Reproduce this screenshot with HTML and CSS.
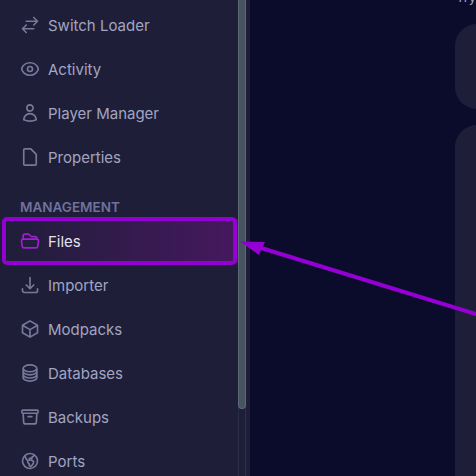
FILE: index.html
```html
<!DOCTYPE html>
<html lang="en">
<head>
<meta charset="utf-8">
<title>Files</title>
<link rel="stylesheet" href="styles.css">
</head>
<body>
<div class="app">
  <aside class="sidebar">
    <nav class="nav">
      <a class="item"><svg class="icon" viewBox="0 0 24 24"><path d="M7.5 21 3 16.5m0 0L7.5 12M3 16.5h13.5m0-13.5L21 7.5m0 0L16.5 12M21 7.5H7.5"/></svg>Switch Loader</a>
      <a class="item"><svg class="icon" viewBox="0 0 24 24"><path d="M2.036 12.322a1.012 1.012 0 0 1 0-.639C3.423 7.51 7.36 4.5 12 4.5c4.638 0 8.573 3.007 9.963 7.178.07.207.07.431 0 .639C20.577 16.49 16.64 19.5 12 19.5c-4.638 0-8.573-3.007-9.963-7.178Z"/><path d="M15 12a3 3 0 1 1-6 0 3 3 0 0 1 6 0Z"/></svg>Activity</a>
      <a class="item"><svg class="icon" viewBox="0 0 24 24"><path d="M15.75 6a3.75 3.75 0 1 1-7.5 0 3.75 3.75 0 0 1 7.5 0ZM4.501 20.118a7.5 7.5 0 0 1 14.998 0A17.933 17.933 0 0 1 12 21.75c-2.676 0-5.216-.584-7.499-1.632Z"/></svg>Player Manager</a>
      <a class="item"><svg class="icon" viewBox="0 0 24 24"><path d="M13 2.25H5.625c-.621 0-1.125.504-1.125 1.125v17.25c0 .621.504 1.125 1.125 1.125h12.75c.621 0 1.125-.504 1.125-1.125V8.75Z"/></svg>Properties</a>
      <div class="heading">MANAGEMENT</div>
      <a class="item active"><svg class="icon" viewBox="0 0 24 24"><path d="M3.75 9.776c.112-.017.227-.026.344-.026h15.812c.117 0 .232.009.344.026m-16.5 0a2.25 2.25 0 0 0-1.883 2.542l.857 6a2.25 2.25 0 0 0 2.227 1.932H19.05a2.25 2.25 0 0 0 2.227-1.932l.857-6a2.25 2.25 0 0 0-1.883-2.542m-16.5 0V6A2.25 2.25 0 0 1 6 3.75h3.879a1.5 1.5 0 0 1 1.06.44l2.122 2.12a1.5 1.5 0 0 0 1.06.44H18A2.25 2.25 0 0 1 20.25 9v.776"/></svg>Files</a>
      <a class="item"><svg class="icon" viewBox="0 0 24 24"><path d="M3 16.5v2.25A2.25 2.25 0 0 0 5.25 21h13.5A2.25 2.25 0 0 0 21 18.75V16.5M16.5 12 12 16.5m0 0L7.5 12m4.5 4.5V3"/></svg>Importer</a>
      <a class="item"><svg class="icon" viewBox="0 0 24 24"><path d="m21 7.5-9-5.25L3 7.5m18 0-9 5.25m9-5.25v9l-9 5.25M3 7.5l9 5.25M3 7.5v9l9 5.25m0-9v9"/></svg>Modpacks</a>
      <a class="item"><svg class="icon" viewBox="0 0 24 24"><path d="M20.25 6.375c0 2.278-3.694 4.125-8.25 4.125S3.75 8.653 3.75 6.375m16.5 0c0-2.278-3.694-4.125-8.25-4.125S3.75 4.097 3.75 6.375m16.5 0v11.25c0 2.278-3.694 4.125-8.25 4.125s-8.25-1.847-8.25-4.125V6.375m16.5 0v3.75m-16.5-3.75v3.75m16.5 0v3.75C20.25 16.153 16.556 18 12 18s-8.25-1.847-8.25-4.125v-3.75m16.5 0c0 2.278-3.694 4.125-8.25 4.125s-8.25-1.847-8.25-4.125"/></svg>Databases</a>
      <a class="item"><svg class="icon" viewBox="0 0 24 24"><path d="m20.25 7.5-.625 10.632a2.25 2.25 0 0 1-2.247 2.118H6.622a2.25 2.25 0 0 1-2.247-2.118L3.75 7.5m6 4.125h4.5M3.375 7.5h17.25c.621 0 1.125-.504 1.125-1.125v-1.5c0-.621-.504-1.125-1.125-1.125H3.375c-.621 0-1.125.504-1.125 1.125v1.5c0 .621.504 1.125 1.125 1.125Z"/></svg>Backups</a>
      <a class="item"><svg class="icon" viewBox="0 0 24 24"><path d="m6.115 5.19.319 1.913A6 6 0 0 0 8.11 10.36L9.75 12l-.387.775c-.217.433-.132.956.21 1.298l1.348 1.348c.21.21.329.497.329.795v1.089c0 .426.24.815.622 1.006l.153.076c.433.217.956.132 1.298-.21l.723-.723a8.7 8.7 0 0 0 2.288-4.042 1.087 1.087 0 0 0-.358-1.099l-1.33-1.108c-.251-.21-.582-.299-.905-.245l-1.17.195a1.125 1.125 0 0 1-.98-.314l-.295-.295a1.125 1.125 0 0 1 0-1.591l.13-.132a1.125 1.125 0 0 1 1.3-.21l.603.302a.809.809 0 0 0 1.086-1.086L14.25 7.5l1.256-.837a4.5 4.5 0 0 0 1.528-1.732l.146-.292M6.115 5.19A9 9 0 1 0 17.18 4.64M6.115 5.19A8.965 8.965 0 0 1 12 3c1.929 0 3.716.607 5.18 1.64"/></svg>Ports</a>
    </nav>
    <div class="scrollbar"><div class="thumb"></div></div>
  </aside>
  <main class="main">
    <div class="clip-text">Try</div>
    <div class="card card-short"></div>
    <div class="card card-tall"></div>
  </main>
</div>
<div class="highlight"></div>
<svg class="arrow" viewBox="0 0 476 476"><path class="arrow-line" d="M258 247 476 314"/><path class="arrow-head" d="M240 241.5 265 242 259 255Z"/></svg>
</body>
</html>
```
FILE: styles.css
```css
* { box-sizing: border-box; }
html, body { margin: 0; height: 476px; overflow: hidden; background: #0b0b2b; }
body { font-family: Inter, "Noto Sans", sans-serif; position: relative; }
.app { display: flex; height: 476px; overflow: hidden; }
.sidebar { width: 250px; flex: none; background: #1e1e38; position: relative; overflow: hidden; }
.nav { display: flex; flex-direction: column; margin-top: 3px; padding-right: 12px; }
.item { display: flex; align-items: center; gap: 8px; height: 44px; padding-left: 20px; font-size: 15px; color: #a2a5c2; flex: none; }
.icon { width: 20px; height: 20px; flex: none; fill: none; stroke: #77789a; stroke-width: 2; stroke-linecap: round; stroke-linejoin: round; }
.heading { height: 40px; padding: 19px 0 0 20px; font-size: 13.5px; line-height: 18px; font-weight: 600; color: #70729c; flex: none; }
.active { color: #e4e0ee; background: linear-gradient(90deg, #1e1e38, #46185f); }
.active .icon { stroke: #a01fd0; }
.scrollbar { position: absolute; top: 0; bottom: 0; left: 238px; width: 8px; border-left: 1px solid #2e2e48; border-right: 1px solid #2e2e48; }
.thumb { height: 409px; margin: 0 -1px; background: #465462; border: 1px solid #5c6a78; border-top: 0; border-radius: 0 0 4px 4px; }
.main { flex: 1; padding: 24px 0 0 205px; position: relative; overflow: hidden; }
.clip-text { position: absolute; left: 206px; top: -11px; font-size: 13px; color: #a2a5c2; }
.card { width: 100px; background: #1e1e38; border-radius: 22px; }
.card-short { height: 85px; }
.card-tall { height: 400px; margin-top: 16px; }
.highlight { position: absolute; left: 2px; top: 217px; width: 235px; height: 48px; border: 4px solid #9400d3; border-radius: 5px; }
.arrow { position: absolute; left: 0; top: 0; width: 476px; height: 476px; }
.arrow-line { stroke: #9400d3; stroke-width: 4; fill: none; }
.arrow-head { fill: #9400d3; }
```
